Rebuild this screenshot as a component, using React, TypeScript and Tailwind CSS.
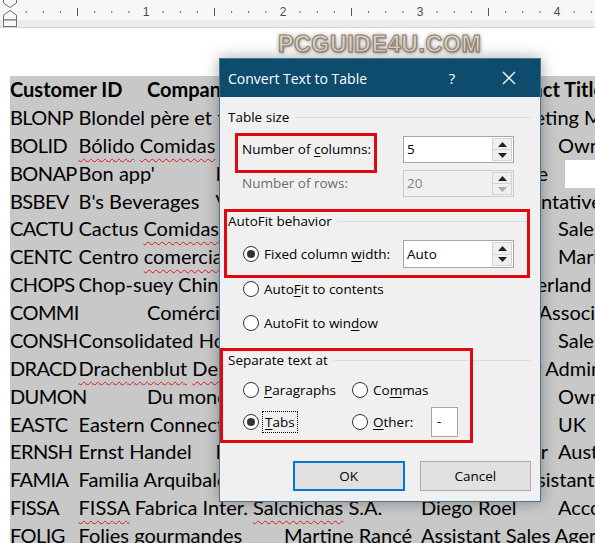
import React from "react";

type Seg = [number, React.ReactNode];
type DocRow = { segs: Seg[]; bold?: boolean; short?: boolean };

const colStart = [
  "col-start-1",
  "col-start-2",
  "col-start-3",
  "col-start-4",
  "col-start-5",
  "col-start-6",
  "col-start-7",
  "col-start-8",
  "col-start-9",
  "col-start-10",
];

function Sq({ children }: { children: React.ReactNode }) {
  return (
    <span className="underline decoration-wavy decoration-[#e0161b] decoration-1 underline-offset-[5px]">
      {children}
    </span>
  );
}

const rows: DocRow[] = [
  { bold: true, segs: [[0, "Customer ID"], [2, "Company Name"], [5, "Contact Name"], [7, "Contact Title"]] },
  { segs: [[0, "BLONP"], [1, "Blondel père et fils"], [4, "Frédérique Citeaux"], [7, "Marketing Manager"]] },
  {
    segs: [
      [0, "BOLID"],
      [1, <><Sq>Bólido</Sq> <Sq>Comidas</Sq> preparadas</>],
      [5, "Martín Sommer"],
      [8, "Owner"],
    ],
  },
  { short: true, segs: [[0, "BONAP"], [1, "Bon app'"], [3, "Laurence Lebihan"], [6, "Owner"], [7, "France"]] },
  { segs: [[0, "BSBEV"], [1, "B's Beverages"], [3, "Victoria Ashworth"], [6, "Sales Representative"]] },
  {
    segs: [
      [0, "CACTU"],
      [1, <>Cactus <Sq>Comidas</Sq> para llevar</>],
      [5, "Patricio Simpson"],
      [8, "Sales Agent"],
    ],
  },
  {
    segs: [
      [0, "CENTC"],
      [1, <>Centro <Sq>comercial</Sq> <Sq>Moctezuma</Sq></>],
      [5, "Francisco Chang"],
      [8, "Marketing Manager"],
    ],
  },
  { segs: [[0, "CHOPS"], [1, "Chop-suey Chinese"], [4, "Yang Wang"], [6, "Owner"], [7, "Switzerland"]] },
  { segs: [[0, "COMMI"], [2, "Comércio Mineiro"], [4, "Pedro Afonso"], [7, "Sales Associate"]] },
  { segs: [[0, "CONSH"], [1, "Consolidated Holdings"], [4, "Elizabeth Brown"], [8, "Sales Representative"]] },
  {
    segs: [
      [0, "DRACD"],
      [1, <><Sq>Drachenblut</Sq> <Sq>Delikatessen</Sq></>],
      [5, "Sven Ottlieb"],
      [7, "Order Administrator"],
    ],
  },
  { segs: [[0, "DUMON"], [2, "Du monde entier"], [5, "Janine Labrune"], [8, "Owner"]] },
  { segs: [[0, "EASTC"], [1, "Eastern Connection"], [4, "Ann Devon"], [6, "Sales Agent"], [8, "UK"]] },
  { segs: [[0, "ERNSH"], [1, "Ernst Handel"], [3, "Roland Mendel"], [6, "Sales Manager"], [8, "Austria"]] },
  { segs: [[0, "FAMIA"], [1, "Familia Arquibaldo"], [4, "Aria Cruz"], [6, "Marketing Assistant"]] },
  {
    segs: [
      [0, "FISSA"],
      [1, <><Sq>FISSA</Sq> Fabrica Inter. <Sq>Salchichas</Sq> S.A.</>],
      [6, "Diego Roel"],
      [8, "Accounting Manager"],
    ],
  },
  { segs: [[0, "FOLIG"], [1, "Folies gourmandes"], [4, "Martine Rancé"], [6, "Assistant Sales Agent"]] },
];

function Ruler() {
  const ticks = [];
  for (let k = 1; k < 36; k++) {
    const x = 9 + k * 17.125;
    if (k % 8 === 0) {
      ticks.push(
        <text key={k} x={x} y={16} textAnchor="middle" fontSize="12" fill="#4a4a4a" fontFamily="Liberation Sans, sans-serif">
          {k / 8}
        </text>
      );
    } else if (k % 4 === 0) {
      ticks.push(<rect key={k} x={x - 0.5} y={8} width={1} height={8} fill="#555" />);
    } else {
      ticks.push(<rect key={k} x={x - 0.5} y={11} width={1} height={2} fill="#666" />);
    }
  }
  return (
    <div className="h-[28px] border-b border-[#d4d4d4] bg-[#f7f7f7]">
      <svg width="595" height="27" className="block">
        <rect x="0" y="20" width="595" height="7" fill="#ececec" />
        {ticks}
        <g fill="#f7f7f7" stroke="#6e6e6e" strokeWidth="1">
          <path d="M3.5 -1 H16.5 V3 L10 7.5 L3.5 3 Z" />
          <path d="M3.5 20 V15 L10 10.5 L16.5 15 V20 Z" />
          <rect x="3.5" y="20" width="13" height="6.5" />
        </g>
      </svg>
    </div>
  );
}

function Radio({ checked }: { checked?: boolean }) {
  return (
    <span className="flex h-[16px] w-[16px] shrink-0 items-center justify-center rounded-full border border-[#333] bg-white">
      {checked && <span className="h-[8px] w-[8px] rounded-full bg-[#333]" />}
    </span>
  );
}

function Tri({ up, color }: { up?: boolean; color: string }) {
  return (
    <svg width="9" height="5" viewBox="0 0 9 5" className="block">
      <path d={up ? "M0 5 L4.5 0 L9 5 Z" : "M0 0 L9 0 L4.5 5 Z"} fill={color} />
    </svg>
  );
}

function SpinBox({ value, disabled, h = 27 }: { value: string; disabled?: boolean; h?: number }) {
  return (
    <div
      className={`flex w-[111px] border p-[1px] ${h === 28 ? "h-[28px]" : "h-[27px]"} ${
        disabled ? "border-[#cccccc] bg-[#f0f0f0] text-[#838383]" : "border-[#a5a5a5] bg-white text-black"
      }`}
    >
      <div className="flex flex-1 items-center pl-[2px]">{value}</div>
      <div className="flex w-[20px] flex-col border border-[#d4d4d4] bg-[#efefef]">
        <div className="flex flex-1 items-center justify-center border-b border-[#d4d4d4]">
          <Tri up color="#222" />
        </div>
        <div className="flex flex-1 items-center justify-center">
          <Tri color={disabled ? "#a8a8a8" : "#222"} />
        </div>
      </div>
    </div>
  );
}

function GroupHead({ label }: { label: string }) {
  return (
    <div className="flex h-[20px] items-center">
      <span>{label}</span>
      <span className="ml-[6px] h-px flex-1 bg-[#dcdcdc]" />
    </div>
  );
}

function Dialog() {
  return (
    <div className="absolute left-[219px] top-[58px] w-[322px] border border-[#4a7690] shadow-[0_0_14px_rgba(0,0,0,0.35)] font-['Open_Sans'] text-[13.5px] text-black">
      <div className="flex h-[38px] items-center bg-[#0d4c6c] text-white">
        <span className="flex-1 pl-[8px] text-[14px]">Convert Text to Table</span>
        <span className="ml-[2px] w-[30px] text-center text-[15px]">?</span>
        <span className="ml-[19px] mr-[8px] flex w-[46px] justify-center">
          <svg width="14" height="14" viewBox="0 0 14 14">
            <path d="M1 1 L13 13 M13 1 L1 13" stroke="white" strokeWidth="1.3" />
          </svg>
        </span>
      </div>

      <div className="relative bg-[#f0f0f0] pl-[8px] pr-[9px] pt-[10px] pb-[10px]">
        <GroupHead label="Table size" />
        <div className="mt-[9px] flex items-center">
          <span className="w-[175px] pl-[14px]">
            Number of <u className="underline-offset-2">c</u>olumns:
          </span>
          <SpinBox value="5" />
        </div>
        <div className="mt-[7px] flex items-center">
          <span className="w-[175px] pl-[14px] text-[#6d6d6d]">Number of rows:</span>
          <SpinBox value="20" disabled />
        </div>

        <div className="mt-[14px]">
          <GroupHead label="AutoFit behavior" />
        </div>
        <div className="mt-[9px] flex items-center">
          <div className="flex w-[175px] items-center gap-[5px] pl-[15px]">
            <Radio checked />
            <span>
              Fixed column <u className="underline-offset-2">w</u>idth:
            </span>
          </div>
          <SpinBox value="Auto" h={28} />
        </div>
        <div className="mt-[11px] flex h-[20px] items-center gap-[5px] pl-[15px]">
          <Radio />
          <span>
            Auto<u className="underline-offset-2">F</u>it to contents
          </span>
        </div>
        <div className="mt-[14px] flex h-[20px] items-center gap-[5px] pl-[15px]">
          <Radio />
          <span>
            AutoFit to win<u className="underline-offset-2">d</u>ow
          </span>
        </div>

        <div className="mt-[17px]">
          <GroupHead label="Separate text at" />
        </div>
        <div className="mt-[10px] flex h-[20px] items-center">
          <div className="flex w-[124px] items-center gap-[5px] pl-[15px]">
            <Radio />
            <span>
              <u className="underline-offset-2">P</u>aragraphs
            </span>
          </div>
          <div className="flex items-center gap-[5px]">
            <Radio />
            <span>
              Co<u className="underline-offset-2">m</u>mas
            </span>
          </div>
        </div>
        <div className="mt-[7px] flex h-[30px] items-center">
          <div className="flex w-[124px] items-center gap-[3px] pl-[15px]">
            <Radio checked />
            <span className="flex h-[22px] items-center border border-dotted border-black px-[2px]">
              <u className="underline-offset-2">T</u>abs
            </span>
          </div>
          <div className="flex w-[79px] items-center gap-[5px]">
            <Radio />
            <span>
              <u className="underline-offset-2">O</u>ther:
            </span>
          </div>
          <div className="flex h-[30px] w-[27px] items-start border border-[#a5a5a5] bg-white pl-[5px] pt-[3px]">
            -
          </div>
        </div>

        <div className="mt-[24px] flex">
          <button className="ml-[65px] h-[30px] w-[112px] border-2 border-[#0078d7] bg-[#e1e1e1]">OK</button>
          <button className="ml-[15px] h-[30px] w-[112px] border border-[#adadad] bg-[#e1e1e1]">Cancel</button>
        </div>

        <div className="pointer-events-none absolute left-[15px] top-[36px] h-[40px] w-[142px] border-[3px] border-[#e1080f]" />
        <div className="pointer-events-none absolute left-[4px] top-[112px] h-[69px] w-[306px] border-[3px] border-[#e1080f]" />
        <div className="pointer-events-none absolute left-[0px] top-[251px] h-[95px] w-[253px] border-[3px] border-[#e1080f]" />
      </div>
    </div>
  );
}

export default function App() {
  return (
    <div className="relative h-[543px] w-[595px] overflow-hidden bg-white">
      <Ruler />
      <div className="h-[48px] pl-[278px] pt-[5px]">
        <span className="font-['Liberation_Sans'] text-[23px] font-bold leading-[23px] tracking-[0.7px] text-[#ddd2c2] [-webkit-text-stroke:1px_#8f8170] [text-shadow:0_0_5px_rgba(0,0,0,0.45),1px_1px_2px_rgba(0,0,0,0.3)]">
          PCGUIDE4U.COM
        </span>
      </div>
      <div className="pl-[10px] font-['Lato'] text-[20px] text-black">
        {rows.map((row, i) => (
          <div
            key={i}
            className={`grid h-[27.875px] grid-cols-[repeat(10,68.5px)] whitespace-nowrap bg-[#c8c8c8] leading-[27.875px] ${
              row.short ? "w-[555px]" : "w-full"
            } ${row.bold ? "font-bold" : ""}`}
          >
            {row.segs.map(([at, text], j) => (
              <span
                key={j}
                className={`${colStart[at]} row-start-1 ${at === 0 && !row.bold ? "tracking-[-0.6px]" : ""}`}
              >
                {text}
              </span>
            ))}
          </div>
        ))}
      </div>
      <Dialog />
    </div>
  );
}
